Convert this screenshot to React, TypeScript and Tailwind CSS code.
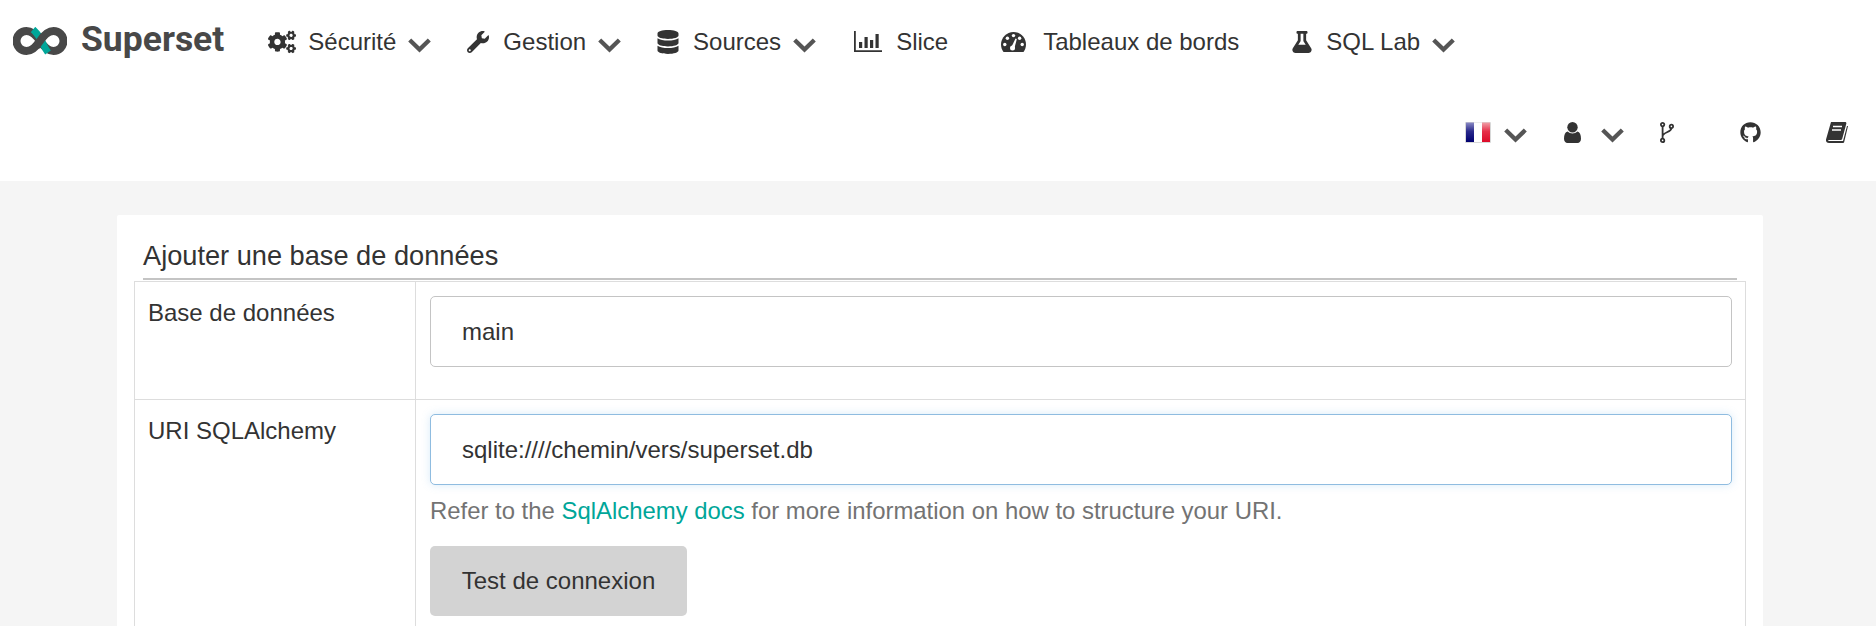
import { FaCogs, FaWrench, FaDatabase, FaFlask, FaGithub } from "react-icons/fa";
import type { ReactNode } from "react";

function Logo() {
  return (
    <svg width="54" height="28" viewBox="0 0 54 28" className="shrink-0">
      <path d="M27 14 C23 8 19 4 13.500 4 A10 10 0 0 0 13.500 24 C19 24 23 20 27 14 C31 8 35 4 40.500 4 A10 10 0 0 1 40.500 24 C35 24 31 20 27 14" fill="none" stroke="#484848" strokeWidth="8" />
      <path d="M20 2.500 C23 5 25 8 27 11 C29 14 31 20 35 25.500" fill="none" stroke="#00a699" strokeWidth="7" />
      <path d="M23 19.500 L31 8.500" fill="none" stroke="#484848" strokeWidth="8" />
    </svg>
  );
}

function Chevron() {
  return (
    <svg width="23" height="15" viewBox="0 0 23 15" className="ml-[12px] mt-[7px] shrink-0" fill="#555555">
      <path d="M3.200 .6 L11.500 8.600 L19.800 .6 L22.800 3.600 L11.500 14.600 L.2 3.600z" />
    </svg>
  );
}

function BarIcon() {
  return (
    <svg width="28" height="21" viewBox="0 0 28 21" fill="#333333">
      <path d="M0 0h1.800v19.200H28V21H0z" />
      <path d="M5 11h3.200v6H5zM10.500 6h3.200v11h-3.200zM16 9h3.200v8H16zM21.500 3h3.200v14h-3.200z" />
    </svg>
  );
}

function GaugeIcon() {
  return (
    <svg width="25" height="20" viewBox="0 0 25 20">
      <path d="M12.500 0C5.600 0 0 5.600 0 12.500c0 2.800.9 5.400 2.500 7.500h20c1.600-2.100 2.500-4.700 2.500-7.500C25 5.600 19.400 0 12.500 0z" fill="#333333" />
      <g fill="#ffffff">
        <circle cx="12.500" cy="3.600" r="1.700" />
        <circle cx="6.400" cy="6.300" r="1.700" />
        <circle cx="3.800" cy="12.500" r="1.700" />
        <circle cx="21.200" cy="12.500" r="1.700" />
        <circle cx="18.600" cy="6.300" r="1.700" />
        <circle cx="11.500" cy="16" r="2.500" />
        <path d="M10.200 15.500 L14.500 6.500 L15.800 6.900 L13.400 16.500z" />
      </g>
    </svg>
  );
}

function UserIcon() {
  return (
    <svg width="17" height="21" viewBox="0 0 17 21" fill="#333333">
      <circle cx="8.500" cy="5.200" r="5.200" />
      <path d="M3.600 9.500c1.300 1.300 3 2 4.900 2s3.600-.7 4.900-2c2.400.4 3.600 3 3.600 7.300 0 2.700-1.500 4.200-3.500 4.200h-10C1.500 21 0 19.500 0 16.800c0-4.300 1.200-6.900 3.600-7.300z" />
    </svg>
  );
}

function ForkIcon() {
  return (
    <svg width="14" height="21" viewBox="0 0 14 21" fill="none" stroke="#333333" strokeWidth="1.800">
      <circle cx="2.600" cy="2.600" r="1.700" />
      <circle cx="2.600" cy="18.400" r="1.700" />
      <circle cx="11.400" cy="4.400" r="1.700" />
      <path d="M2.600 4.400v12.200M11.400 6.200c0 4-8.800 4-8.800 8" />
    </svg>
  );
}

function BookIcon() {
  return (
    <svg width="22" height="21" viewBox="0 0 22 21">
      <path d="M5 0h14c1 0 1.600.8 1.300 1.800l-4 14.700c-.3 1-1 1.500-2 1.500H3c-1 0-1.200 1-.4 1H17l4-15h1l-3.800 16c-.2.700-.8 1-1.400 1H3c-2 0-3.400-1.600-3-3.600z" fill="#333333" />
      <path d="M7 4.500h9M6 8h9" stroke="#ffffff" strokeWidth="1.600" />
    </svg>
  );
}

function FlagIcon() {
  return (
    <svg width="26" height="21" viewBox="0 0 26 21" className="mr-[1px]">
      <defs>
        <linearGradient id="blue" x1="0" y1="0" x2="0" y2="1">
          <stop offset="0" stopColor="#8a8ac4" />
          <stop offset="0.45" stopColor="#2a2a8c" />
          <stop offset="1" stopColor="#000070" />
        </linearGradient>
        <linearGradient id="red" x1="0" y1="0" x2="0" y2="1">
          <stop offset="0" stopColor="#f0a0a8" />
          <stop offset="0.45" stopColor="#e6304a" />
          <stop offset="1" stopColor="#dc0a28" />
        </linearGradient>
      </defs>
      <rect x="0" y="0" width="26" height="21" fill="#d8d8d8" rx="1" />
      <rect x="1" y="0.500" width="8" height="19.500" fill="url(#blue)" />
      <rect x="9" y="0.500" width="8" height="19.500" fill="#ffffff" />
      <rect x="17" y="0.500" width="8" height="19.500" fill="url(#red)" />
    </svg>
  );
}

function NavItem(props: { icon: ReactNode; iconBox: string; label: string; margin: string; caret?: boolean }) {
  return (
    <a className={"flex items-center text-[#333333] " + props.margin}>
      <span className={"flex items-center " + props.iconBox}>{props.icon}</span>
      <span>{props.label}</span>
      {props.caret && <Chevron />}
    </a>
  );
}

export default function App() {
  return (
    <div className="h-screen overflow-hidden bg-[#f5f5f5] text-[24px] text-[#333333] font-['Liberation_Sans',Arial,sans-serif]">
      <nav className="bg-white h-[181px]">
        <div className="flex items-center h-[83px] pl-[13px]">
          <div className="flex items-center -mt-[2px]">
            <Logo />
            <span className="ml-[14px] font-['Roboto',sans-serif] font-bold text-[35.500px] text-[#484848] -mt-[1px]">Superset</span>
          </div>
          <NavItem margin="ml-[44px]" iconBox="w-[40px]" label="Sécurité" caret icon={<FaCogs className="w-[28px] h-[24px] shrink-0" />} />
          <NavItem margin="ml-[36px]" iconBox="w-[36px]" label="Gestion" caret icon={<FaWrench className="w-[22px] h-[22px]" />} />
          <NavItem margin="ml-[36px]" iconBox="w-[36px]" label="Sources" caret icon={<FaDatabase className="w-[22px] h-[24px]" />} />
          <NavItem margin="ml-[38px]" iconBox="w-[42px]" label="Slice" icon={<BarIcon />} />
          <NavItem margin="ml-[53px]" iconBox="w-[42px]" label="Tableaux de bords" icon={<GaugeIcon />} />
          <NavItem margin="ml-[52px]" iconBox="w-[35px]" label="SQL Lab" caret icon={<FaFlask className="w-[22px] h-[22px]" />} />
        </div>
        <div className="flex items-center justify-end h-[98px] pr-[28px]">
          <FlagIcon />
          <Chevron />
          <span className="ml-[37px] mr-[8px]"><UserIcon /></span>
          <Chevron />
          <span className="ml-[36px]"><ForkIcon /></span>
          <FaGithub className="ml-[66px] w-[21px] h-[21px]" />
          <span className="ml-[65px]"><BookIcon /></span>
        </div>
      </nav>

      <main className="ml-[117px] mr-[113px] mt-[34px] bg-white pl-[17px] pr-[17.500px] rounded-[2px]">
        <h1 className="ml-[9px] mr-[8.750px] pt-[19px] h-[65px] border-b-2 border-[#c4c4c4] text-[27.200px] leading-[44px]">Ajouter une base de données</h1>
        <div className="mt-[1px] border border-[#dddddd] grid grid-cols-[281px_1fr]">
          <div className="pl-[13px] p-[14px] leading-[35px] border-r border-b border-[#dddddd] h-[118px]">
            <span className="block -mt-[1px]">Base de données</span>
          </div>
          <div className="pl-[14px] pr-[13px] pt-[14px] border-b border-[#dddddd]">
            <input readOnly value="main" className="w-full h-[71px] px-[31px] border border-[#c4c4c4] rounded-[5px] bg-white text-[#333333] outline-none" />
          </div>
          <div className="pl-[13px] p-[14px] leading-[35px] border-r border-[#dddddd] h-[300px]">
            <span className="block -mt-[1px]">URI SQLAlchemy</span>
          </div>
          <div className="pl-[14px] pr-[13px] pt-[14px]">
            <input readOnly value="sqlite:////chemin/vers/superset.db" className="w-full h-[71px] px-[31px] border border-[#8fbce0] rounded-[5px] bg-white text-[#333333] outline-none shadow-[0_0_8px_rgba(102,175,233,0.25)]" />
            <p className="mt-[8px] leading-[35px] text-[#737373] text-[23.900px]">
              Refer to the <a className="text-[#00a699]">SqlAlchemy docs</a> for more information on how to structure your URI.
            </p>
            <button className="mt-[18px] h-[70px] w-[257px] rounded-[5px] bg-[#d3d3d3] text-[#333333]">Test de connexion</button>
          </div>
        </div>
      </main>
    </div>
  );
}
